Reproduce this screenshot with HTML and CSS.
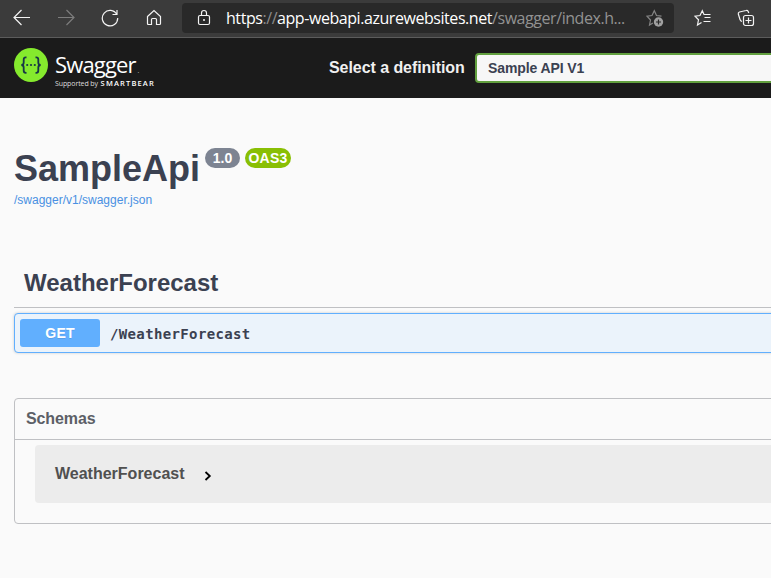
FILE: index.html
```html
<!DOCTYPE html>
<html lang="en">
<head>
<meta charset="utf-8">
<title>Swagger UI</title>
<link rel="stylesheet" href="styles.css">
</head>
<body>
<nav class="browser">
  <svg class="icon back" width="18" height="18" viewBox="0 0 18 18"><path d="M17 8.500H1M8.500 1L1 8.500L8.500 16"/></svg>
  <svg class="icon forward" width="18" height="18" viewBox="0 0 18 18"><path d="M1 8.500H17M9.500 1L17 8.500L9.500 16"/></svg>
  <svg class="icon reload" width="18" height="18" viewBox="0 0 18 18"><path d="M15.800 5.500A7.700 7.700 0 1 0 16.700 9M16 1V5.500H11.500"/></svg>
  <svg class="icon home" width="18" height="18" viewBox="0 0 18 18"><path d="M2.500 7.500L9 1.500L15.500 7.500V14.500Q15.500 15.500 14.500 15.500H11.500V10.500Q11.500 9.500 10.500 9.500H7.500Q6.500 9.500 6.500 10.500V15.500H3.500Q2.500 15.500 2.500 14.500Z"/></svg>
  <div class="address">
    <svg class="icon lock" width="14" height="18" viewBox="0 0 14 18"><rect x="1.500" y="6.500" width="11" height="9" rx="1.500"/><path d="M4.500 6.500V4A2.500 2.500 0 0 1 9.500 4V6.500"/><circle class="solid" cx="7" cy="11" r="1"/></svg>
    <span class="url"><b>https</b>://<b>app-webapi.azurewebsites.net</b><span class="path">/swagger/index.h...</span></span>
    <svg class="icon add-star" width="18" height="18" viewBox="0 0 18 18"><path d="M7 14L3.500 16L4.500 11L1 7.200L6 6.500L8.300 1.700L10.500 6.500L15.500 7.200"/><circle class="solid" cx="12.500" cy="13" r="4.700"/><path class="cut" d="M10 13H15M12.500 10.500V15.500"/></svg>
  </div>
  <svg class="icon favorites" width="18" height="18" viewBox="0 0 18 18"><path d="M7.500 13.500L3.500 16L4.500 10.800L1 7.200L6 6.500L8.300 1.700L10 5.500H16.500M10.500 8.500H16.500M9.500 12.500H16.500"/></svg>
  <svg class="icon collections" width="18" height="18" viewBox="0 0 18 18"><rect x="6.500" y="6.500" width="10" height="10" rx="2"/><path d="M11.500 8.500V14.500M8.500 11.500H14.500M5 12.500Q3.500 12 3 10.500L1.300 5Q1 3.500 2.500 3L9 1.500Q10.500 1 11.200 2.500L11.800 4"/></svg>
</nav>
<header class="topbar">
  <svg class="logo" width="34" height="34" viewBox="0 0 34 34"><circle cx="17" cy="17" r="17"/><path d="M12.500 9.300H11.800Q9.700 9.300 9.700 11.500V14.500Q9.700 17 7.300 17Q9.700 17 9.700 19.500V22.500Q9.700 24.800 11.800 24.800H12.500M21.500 9.300H22.200Q24.300 9.300 24.300 11.500V14.500Q24.300 17 26.700 17Q24.300 17 24.300 19.500V22.500Q24.300 24.800 22.200 24.800H21.500"/><g><circle cx="13.200" cy="17" r="1.100"/><circle cx="17" cy="17" r="1.100"/><circle cx="20.800" cy="17" r="1.100"/></g></svg>
  <div class="brand"><div class="word">Swagger<i>.</i></div><div class="support">Supported by <b>SMARTBEAR</b></div></div>
  <span class="select-label">Select a definition</span>
  <div class="select">Sample API V1</div>
</header>
<main>
  <div class="title"><h1>SampleApi</h1><span class="badge">1.0</span><span class="badge oas">OAS3</span></div>
  <a class="spec">/swagger/v1/swagger.json</a>
  <h2>WeatherForecast</h2>
  <div class="operation"><span class="method">GET</span><span class="route">/WeatherForecast</span></div>
  <section class="schemas">
    <h3>Schemas</h3>
    <div class="model"><span>WeatherForecast</span><svg width="8" height="10" viewBox="0 0 8 10"><path d="M1.500 1L5.800 5L1.500 9"/></svg></div>
  </section>
</main>
</body>
</html>
```
FILE: styles.css
```css
* { box-sizing: border-box; }
body { margin: 0; width: 771px; height: 578px; overflow: hidden; background: #fafafa; color: #3b4151; font-family: "Liberation Sans", sans-serif; }
.browser { display: flex; align-items: center; height: 38px; padding: 0 0 2px 13px; background: #3b3b3b; border-bottom: 1px solid #5c5c5c; }
.icon { flex: none; fill: none; stroke: #f4f4f4; stroke-width: 1.2; }
.forward { margin-left: 26px; stroke: #7d7d7d; }
.reload { margin-left: 26px; }
.home { margin-left: 26px; }
.solid { fill: currentColor; stroke: none; }
.lock { color: #f4f4f4; margin-left: 15px; }
.address { display: flex; align-items: center; flex: none; width: 492px; height: 30px; margin-left: 19px; background: #292929; border-radius: 4px; }
.url { flex: none; margin-left: 15px; width: 420px; color: #8b8b8b; font: 16px/24px "Open Sans", sans-serif; white-space: nowrap; letter-spacing: -.44px; }
.url b { font-weight: 400; color: #fff; }
.path { color: #929292; }
.add-star { stroke: #858585; color: #a0a0a0; }
.cut { stroke: #292929; }
.favorites { margin-left: 20px; }
.collections { margin-left: 25px; }
.topbar { display: flex; height: 60px; background: #1b1b1b; }
.logo { flex: none; margin: 10px 0 0 14px; fill: #85ea2d; }
.logo path { fill: none; stroke: #173647; stroke-width: 1.8; }
.logo g { fill: #173647; }
.brand { flex: none; width: 110px; margin: 11px 0 0 7px; color: #fff; font-family: "Open Sans", sans-serif; white-space: nowrap; }
.word { height: 29px; font-size: 22px; line-height: 30px; letter-spacing: -.85px; font-weight: 400; }
.word i { margin-left: 2px; font-size: 8px; color: #aaa; }
.support { font-size: 7px; line-height: 10px; color: #ddd; letter-spacing: -.1px; }
.support b { margin-left: 1px; color: #fff; font-size: 7.500px; font-weight: 600; letter-spacing: 1.15px; }
.select-label { flex: none; width: 146px; margin-left: 164px; padding-top: 19px; color: #f0f0f0; font-size: 16px; line-height: 22px; font-weight: 700; white-space: nowrap; letter-spacing: -.06px; }
.select { flex: none; width: 310px; height: 30px; margin-top: 15px; padding-left: 11px; background: #f7f7f7; border: 2px solid #62a03f; border-radius: 4px; font-size: 14px; line-height: 26px; font-weight: 700; letter-spacing: -.1px; }
main { padding: 48px 0 0 14px; }
.title { display: flex; height: 45px; }
h1 { width: 191px; margin: 0; font-size: 36px; line-height: 46px; white-space: nowrap; }
.badge { width: 35px; height: 20px; margin-top: 2px; border-radius: 10px; background: #7d8492; color: #fff; font-size: 14px; line-height: 20px; font-weight: 700; text-align: center; }
.oas { width: 46px; margin-left: 5px; background: #89bf04; letter-spacing: .2px; }
.spec { display: block; height: 17px; color: #4990e2; font-size: 12px; line-height: 19px; }
h2 { margin: 50px 0 5px; padding-left: 10px; height: 50px; border-bottom: 1px solid #bfc0c3; font-size: 24px; line-height: 49px; }
.operation { display: flex; align-items: center; width: 780px; height: 40px; padding-left: 5px; background: #ebf3fb; border: 1px solid #61affe; border-radius: 4px; box-shadow: 0 0 3px rgba(0,0,0,.19); }
.method { width: 80px; height: 28px; border-radius: 3px; background: #61affe; color: #fff; font-size: 14px; line-height: 28px; font-weight: 700; text-align: center; text-shadow: 0 1px 0 rgba(0,0,0,.1); letter-spacing: .2px; }
.route { margin-left: 10px; padding-top: 2px; font: 700 14px/20px "DejaVu Sans Mono", monospace; letter-spacing: .36px; }
.schemas { width: 780px; height: 126px; margin-top: 45px; border: 1px solid #bfc0c3; border-radius: 4px; }
h3 { height: 41px; margin: 0; padding-left: 11px; border-bottom: 1px solid #bfc0c3; color: #5c5f67; font-size: 16px; line-height: 39px; letter-spacing: -.1px; }
.model { display: flex; align-items: center; height: 58px; margin: 5px 0 0 20px; padding-left: 20px; background: #ececec; border-radius: 4px; color: #505050; font-size: 16px; font-weight: 700; }
.model svg { margin: 3px 0 0 19px; fill: none; stroke: #000; stroke-width: 1.8; }
```
